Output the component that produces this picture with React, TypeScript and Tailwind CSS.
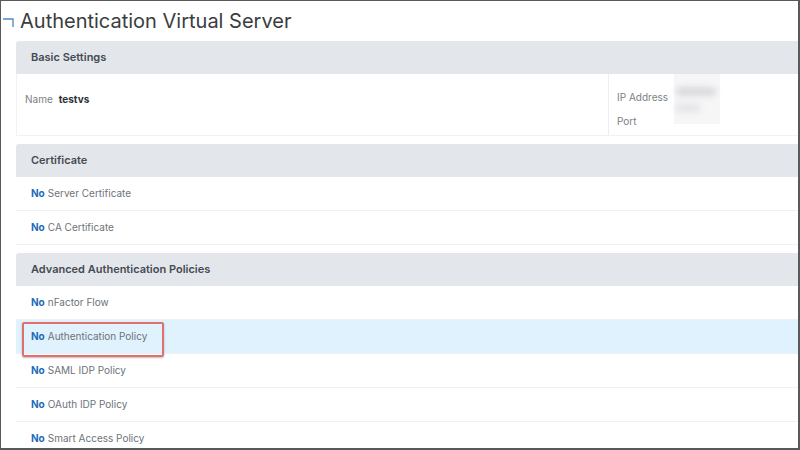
import React from "react";

const font = { fontFamily: "Inter, 'Noto Sans', sans-serif" };

function SectionHeader({ title }: { title: string }) {
  return (
    <div className="h-[33px] shrink-0 flex items-center pl-[15px] bg-[#e3e6eb] rounded-tl-[3px] text-[11px] font-semibold text-[#454b52]">
      {title}
    </div>
  );
}

function Row({ label, highlight }: { label: string; highlight?: boolean }) {
  return (
    <div
      className={`relative h-[34px] shrink-0 flex items-center pl-[15px] border-b border-[#eef0f2] text-[10px] ${
        highlight ? "bg-[#dff2fd]" : "bg-white"
      }`}
    >
      <span className="font-bold text-[#1f6bb8] mr-[3px]">No</span>
      <span className="text-[#6d7379]">{label}</span>
      {highlight && (
        <div className="absolute z-10 left-[6px] top-[2px] w-[142px] h-[35px] border-2 border-[#e0706e] rounded-[2px] shadow-[0_1px_2px_rgba(0,0,0,0.25)]" />
      )}
    </div>
  );
}

export default function App() {
  return (
    <div
      style={font}
      className="w-[800px] h-[450px] overflow-hidden bg-white border-l border-t border-r-2 border-b-2 border-[#595959]"
    >
      <div className="relative h-[40px] flex items-center pl-[19px]">
        <svg className="absolute left-[1px] top-[16px]" width="14" height="12" viewBox="0 0 14 12">
          <path d="M1 2 H11 V10" fill="none" stroke="#4f86c6" strokeWidth="1.3" />
        </svg>
        <h1 className="text-[20px] font-normal text-[#3a3d40]">Authentication Virtual Server</h1>
      </div>

      <div className="pl-[15px] flex flex-col gap-[8px]">
        <div className="flex flex-col">
          <SectionHeader title="Basic Settings" />
          <div className="h-[62px] flex border-b border-l border-[#f1f2f4] bg-white">
            <div className="w-[591px] pl-[8px] pt-[18px] flex text-[10px]">
              <span className="text-[#7a7f84] mr-[6px]">Name</span>
              <span className="font-bold text-[#2e3236]">testvs</span>
            </div>
            <div className="border-l border-[#eceef0] pl-[8px] pt-[16px] flex">
              <div className="flex flex-col gap-[9px] text-[10px] text-[#7a7f84] w-[57px]">
                <span>IP Address</span>
                <span>Port</span>
              </div>
              <div className="w-[46px] h-[50px] -mt-[16px] bg-[#f6f6f7] flex flex-col justify-center gap-[8px] pl-[2px]">
                <div className="w-[40px] h-[9px] rounded-full bg-[#d8d9db] blur-[3px]" />
                <div className="w-[24px] h-[8px] rounded-full bg-[#e2e3e5] blur-[3px]" />
              </div>
            </div>
          </div>
        </div>

        <div className="flex flex-col">
          <SectionHeader title="Certificate" />
          <Row label="Server Certificate" />
          <Row label="CA Certificate" />
        </div>

        <div className="flex flex-col">
          <SectionHeader title="Advanced Authentication Policies" />
          <Row label="nFactor Flow" />
          <Row label="Authentication Policy" highlight />
          <Row label="SAML IDP Policy" />
          <Row label="OAuth IDP Policy" />
          <Row label="Smart Access Policy" />
        </div>
      </div>
    </div>
  );
}
